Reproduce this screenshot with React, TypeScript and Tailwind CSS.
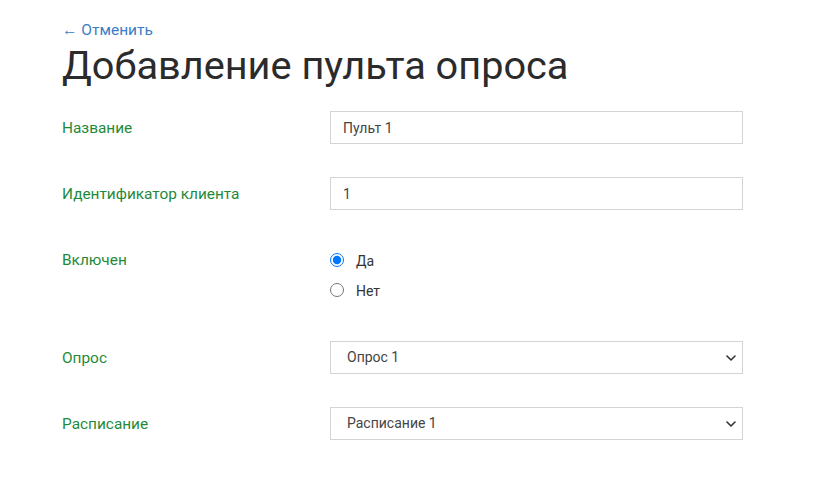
import { useState } from 'react';

function Chevron() {
  return (
    <svg width="10" height="6" viewBox="0 0 10 6" className="pointer-events-none absolute right-[7px] top-1/2 -translate-y-1/2">
      <path d="M1 1l4 4 4-4" fill="none" stroke="#333" strokeWidth="1.6" strokeLinecap="round" strokeLinejoin="round" />
    </svg>
  );
}

export default function App() {
  const [name, setName] = useState('Пульт 1');
  const [clientId, setClientId] = useState('1');
  const [enabled, setEnabled] = useState('yes');
  const [poll, setPoll] = useState('1');
  const [schedule, setSchedule] = useState('1');

  const label = 'text-[15.4px] text-[#1f8a3a]';
  const field =
    'w-full h-[33px] border border-[#d4d4d4] bg-white text-[14px] text-[#444] outline-none';

  return (
    <div className="min-h-screen bg-white font-['Roboto','Liberation_Sans',sans-serif] text-[#333]">
      <div className="px-[62px] pt-[20px]">
        <a href="#" className="block text-[15.5px] leading-[20px] text-[#3b7dc4]">
          ← Отменить
        </a>
        <h1 className="mt-[2px] text-[39.7px] leading-[48px] font-normal text-[#2b2b2b]">
          Добавление пульта опроса
        </h1>

        <form className="mt-[21px] w-[681px]" onSubmit={(e) => e.preventDefault()}>
          <div className="flex items-center mb-[33px]">
            <label className={`${label} w-[268px] shrink-0 pt-[2px]`}>Название</label>
            <input className={`${field} px-[12px]`} value={name} onChange={(e) => setName(e.target.value)} />
          </div>

          <div className="flex items-center mb-[33px]">
            <label className={`${label} w-[268px] shrink-0 pt-[2px]`}>Идентификатор клиента</label>
            <input className={`${field} px-[12px]`} value={clientId} onChange={(e) => setClientId(e.target.value)} />
          </div>

          <div className="flex items-start mb-[40px]">
            <label className={`${label} w-[268px] shrink-0 pt-[6px]`}>Включен</label>
            <div className="flex flex-col gap-[8px] pt-[6px]">
              <label className="flex items-center gap-[12px] text-[14px] text-[#333]">
                <input
                  type="radio"
                  name="enabled"
                  className="m-0 h-[14px] w-[14px]"
                  checked={enabled === 'yes'}
                  onChange={() => setEnabled('yes')}
                />
                <span className="leading-[20px] pt-[2px]">Да</span>
              </label>
              <label className="flex items-center gap-[12px] text-[14px] text-[#333]">
                <input
                  type="radio"
                  name="enabled"
                  className="m-0 h-[14px] w-[14px]"
                  checked={enabled === 'no'}
                  onChange={() => setEnabled('no')}
                />
                <span className="leading-[20px] pt-[2px]">Нет</span>
              </label>
            </div>
          </div>

          <div className="flex items-center mb-[33px]">
            <label className={`${label} w-[268px] shrink-0 pt-[2px]`}>Опрос</label>
            <div className="relative w-full">
              <select
                className={`${field} appearance-none px-[16px]`}
                value={poll}
                onChange={(e) => setPoll(e.target.value)}
              >
                <option value="1">Опрос 1</option>
              </select>
              <Chevron />
            </div>
          </div>

          <div className="flex items-center">
            <label className={`${label} w-[268px] shrink-0 pt-[2px]`}>Расписание</label>
            <div className="relative w-full">
              <select
                className={`${field} appearance-none px-[16px]`}
                value={schedule}
                onChange={(e) => setSchedule(e.target.value)}
              >
                <option value="1">Расписание 1</option>
              </select>
              <Chevron />
            </div>
          </div>
        </form>
      </div>
    </div>
  );
}
